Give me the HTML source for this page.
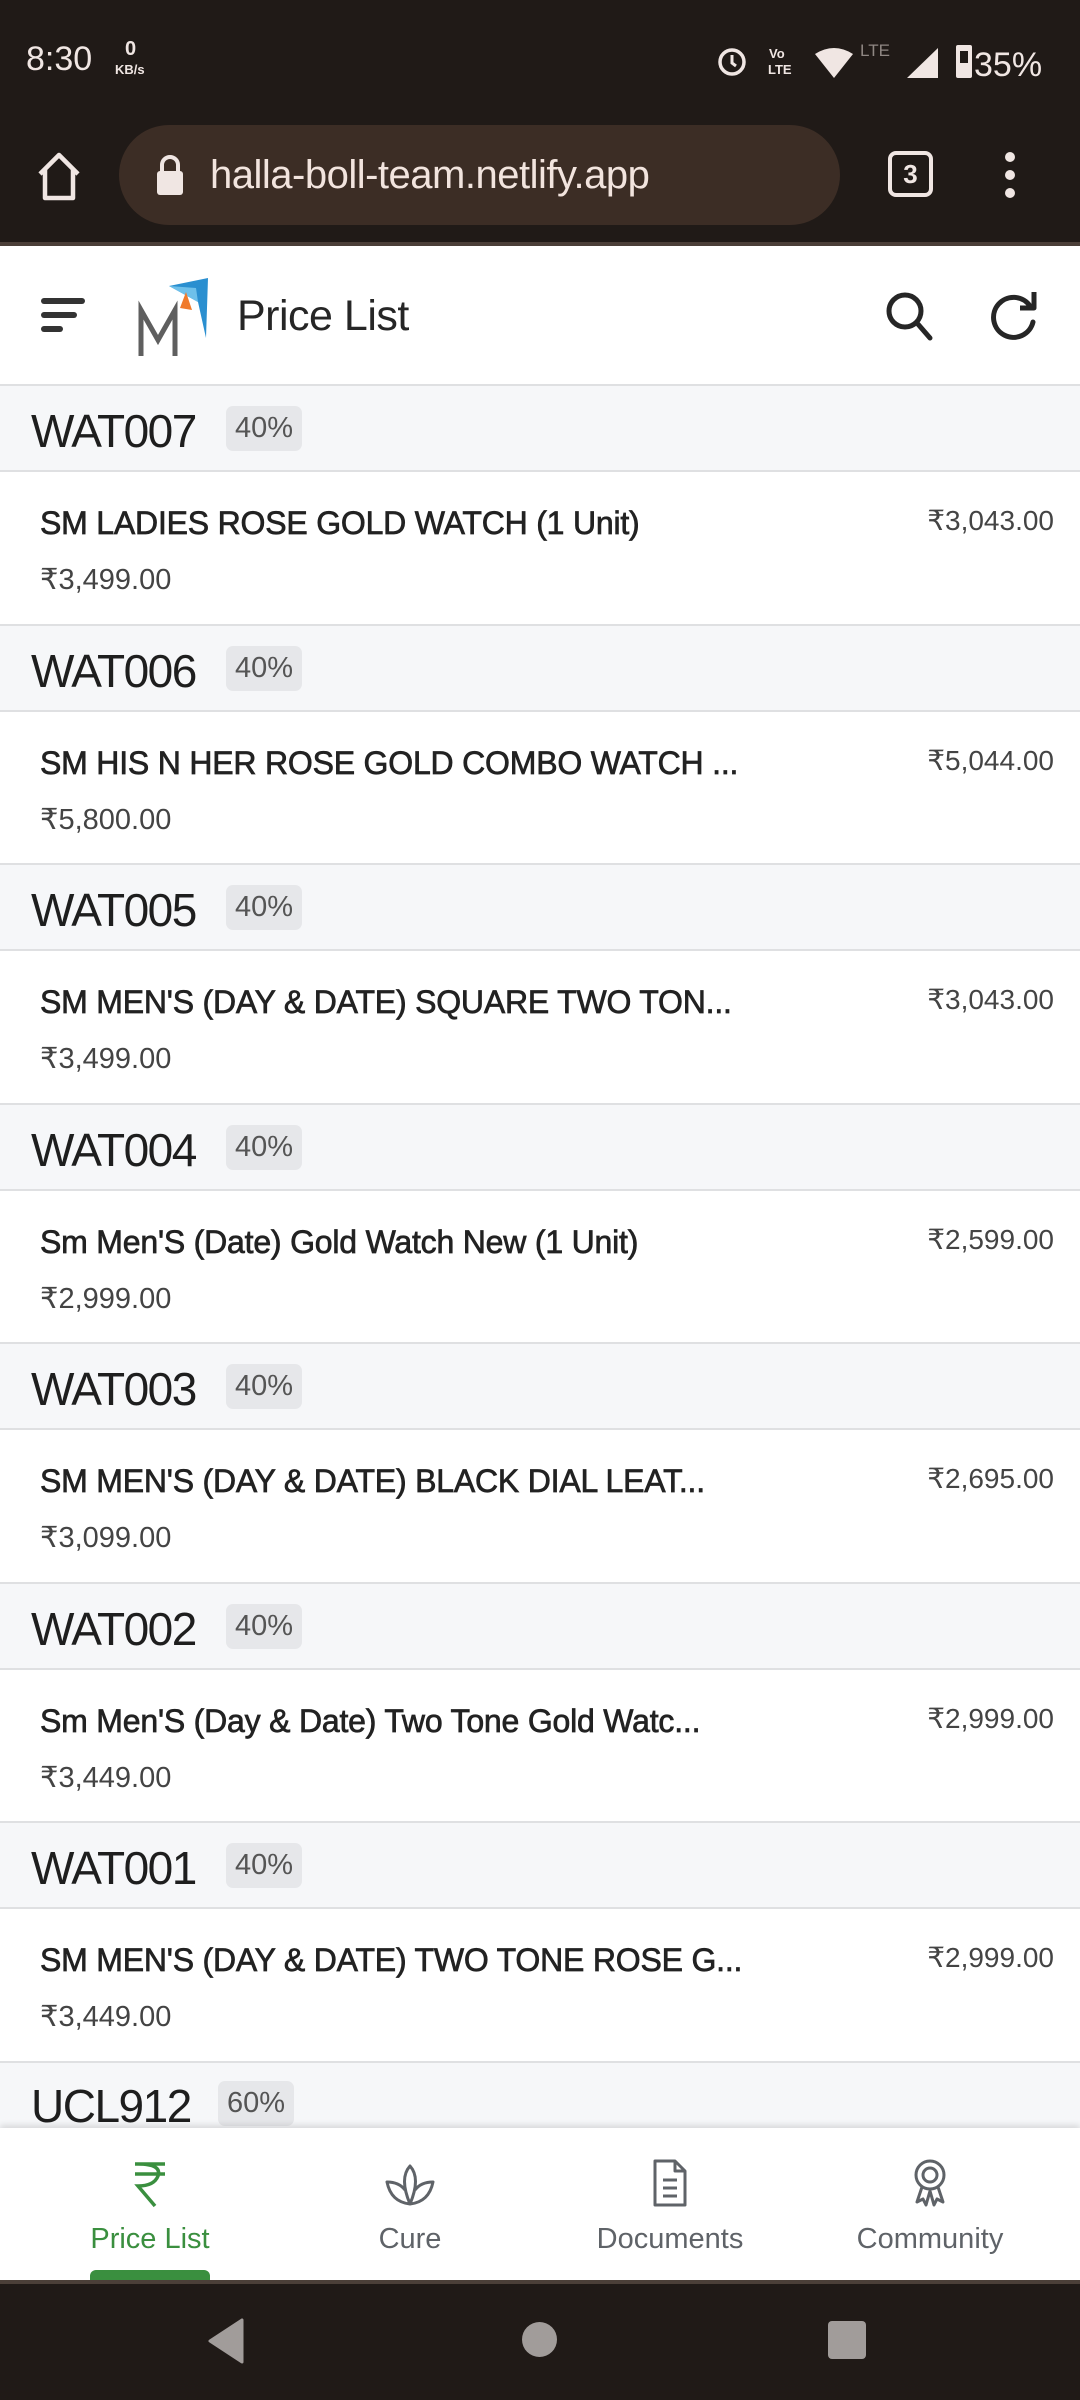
<!DOCTYPE html>
<html><head><meta charset="utf-8">
<style>
*{margin:0;padding:0;box-sizing:border-box}
body{width:1080px;height:2400px;overflow:hidden;background:#fff;font-family:"Liberation Sans","DejaVu Sans",sans-serif;position:relative}
.abs{position:absolute}
#status{left:0;top:0;width:1080px;height:245px;background:#201a17}
#status .line{left:0;top:242px;width:1080px;height:4px;background:#4b3f38}
.pill{left:119px;top:125px;width:721px;height:100px;border-radius:50px;background:#3c2d25}
.url{left:210px;top:153px;font-size:40px;color:#f2e4de;letter-spacing:-0.5px}
.gh{left:0;width:1080px;height:88px;background:#f6f7f9;border-top:2px solid #dfe0e2;border-bottom:2px solid #dfe0e2}
.gh .c{position:absolute;left:31px;top:18px;font-size:46px;color:#1e1e1e;letter-spacing:-1.5px}
.gh .b{position:absolute;left:226px;top:20px;height:45px;padding:0 9px;border-radius:7px;background:#e6e7ea;color:#555;font-size:29px;line-height:45px}
.it{left:0;width:1080px;height:151px;background:#fff}
.it .t{position:absolute;left:40px;top:33px;font-size:32px;color:#222;-webkit-text-stroke:0.7px #222;letter-spacing:-0.2px;white-space:nowrap}
.it .p{position:absolute;left:40px;top:90px;font-size:29px;color:#444}
.it .r{position:absolute;right:26px;top:32px;font-size:28px;color:#444}
#nav{left:0;top:2128px;width:1080px;height:152px;background:#fff;box-shadow:0 -3px 6px rgba(0,0,0,.12)}
.lab{position:absolute;top:95px;width:260px;text-align:center;font-size:29px;color:#5f6368}
#sys{left:0;top:2280px;width:1080px;height:120px;background:#201a17;border-top:4px solid #4b3f38}
</style></head><body>
<div id="status" class="abs">
 <div class="abs" style="left:26px;top:40px;font-size:34px;color:#f0e6e3">8:30</div>
 <div class="abs" style="left:125px;top:38px;font-size:20px;color:#f0e6e3;font-weight:bold">0</div>
 <div class="abs" style="left:115px;top:62px;font-size:13px;color:#f0e6e3;font-weight:bold">KB/s</div>
 <svg class="abs" style="left:712px;top:40px" width="340" height="40" viewBox="0 0 340 40">
  <circle cx="20" cy="22" r="12" fill="none" stroke="#f0e6e3" stroke-width="3.5"/><path d="M20 15v8l4 3" stroke="#f0e6e3" stroke-width="3" fill="none"/>
  <text x="57" y="18" font-size="13" fill="#f0e6e3" font-weight="bold" font-family="Liberation Sans">Vo</text>
  <text x="56" y="34" font-size="13" fill="#f0e6e3" font-weight="bold" font-family="Liberation Sans">LTE</text>
  <path d="M103 14 Q122 2 141 14 L122 38 Z" fill="#f0e6e3"/>
  <text x="148" y="16" font-size="17" fill="#8f8783" font-family="Liberation Sans">LTE</text>
  <path d="M195 38 L226 38 L226 8 Z" fill="#f0e6e3"/>
  <rect x="244" y="5" width="16" height="33" rx="2" fill="#f0e6e3"/><rect x="248" y="11" width="8" height="12" fill="#201a17"/>
  <text x="262" y="36" font-size="34" fill="#f0e6e3" font-family="Liberation Sans">35%</text>
 </svg>
 <svg class="abs" style="left:36px;top:152px" width="46" height="50" viewBox="0 0 46 50"><path d="M4 22 L23 3 L42 22 M9 18 V46 H37 V18" fill="none" stroke="#f0e6e3" stroke-width="4.5" stroke-linejoin="round"/></svg>
 <div class="abs pill"></div>
 <svg class="abs" style="left:155px;top:154px" width="30" height="42" viewBox="0 0 30 42"><path d="M7 18 V11 a8 8 0 0 1 16 0 V18" fill="none" stroke="#f0e6e3" stroke-width="4"/><rect x="2" y="17" width="26" height="24" rx="3" fill="#f0e6e3"/></svg>
 <div class="abs url">halla-boll-team.netlify.app</div>
 <div class="abs" style="left:888px;top:151px;width:45px;height:46px;border:4px solid #f0e6e3;border-radius:8px;color:#f0e6e3;font-size:26px;font-weight:bold;text-align:center;line-height:38px">3</div>
 <svg class="abs" style="left:998px;top:150px" width="24" height="50"><circle cx="12" cy="7" r="5" fill="#f0e6e3"/><circle cx="12" cy="25" r="5" fill="#f0e6e3"/><circle cx="12" cy="43" r="5" fill="#f0e6e3"/></svg>
 <div class="abs line"></div>
</div>
<!-- header -->
<svg class="abs" style="left:40px;top:296px" width="50" height="40"><rect x="1" y="2" width="44" height="6" rx="3" fill="#333"/><rect x="1" y="16" width="36" height="6" rx="3" fill="#333"/><rect x="1" y="30" width="22" height="6" rx="3" fill="#333"/></svg>
<svg class="abs" style="left:136px;top:278px" width="76" height="80" viewBox="0 0 76 80">
 <path d="M5 78 V32 L22 62 L39 32 V78" fill="none" stroke="#5f5f5f" stroke-width="5"/>
 <path d="M33 8 L72 0 L70 60 L62 24 Z" fill="#2a8fd0"/>
 <path d="M33 8 L60 10 L62 24 Z" fill="#6ec0ea"/>
 <path d="M44 30 L50 14 L56 32 Z" fill="#f07a2b"/>
</svg>
<div class="abs" style="left:237px;top:292px;font-size:43px;color:#262626;letter-spacing:-0.5px">Price List</div>
<svg class="abs" style="left:884px;top:290px" width="52" height="52" viewBox="0 0 52 52"><circle cx="21" cy="21" r="16" fill="none" stroke="#262626" stroke-width="5"/><path d="M33 33 L46 48" stroke="#262626" stroke-width="5" stroke-linecap="round"/></svg>
<svg class="abs" style="left:986px;top:288px" width="56" height="56" viewBox="0 0 56 56"><path d="M44 18 A20 20 0 1 0 47 34" fill="none" stroke="#262626" stroke-width="5" stroke-linecap="round"/><path d="M48 4 V20 H34" fill="none" stroke="#262626" stroke-width="5" stroke-linejoin="round"/></svg>

<div class="abs gh" style="top:384px"><span class="c">WAT007</span><span class="b">40%</span></div>
<div class="abs it" style="top:472px"><span class="t">SM LADIES ROSE GOLD WATCH (1 Unit)</span><span class="p">₹3,499.00</span><span class="r">₹3,043.00</span></div>
<div class="abs gh" style="top:624px"><span class="c">WAT006</span><span class="b">40%</span></div>
<div class="abs it" style="top:712px"><span class="t">SM HIS N HER ROSE GOLD COMBO WATCH ...</span><span class="p">₹5,800.00</span><span class="r">₹5,044.00</span></div>
<div class="abs gh" style="top:863px"><span class="c">WAT005</span><span class="b">40%</span></div>
<div class="abs it" style="top:951px"><span class="t">SM MEN'S (DAY &amp; DATE) SQUARE TWO TON...</span><span class="p">₹3,499.00</span><span class="r">₹3,043.00</span></div>
<div class="abs gh" style="top:1103px"><span class="c">WAT004</span><span class="b">40%</span></div>
<div class="abs it" style="top:1191px"><span class="t">Sm Men'S (Date) Gold Watch New (1 Unit)</span><span class="p">₹2,999.00</span><span class="r">₹2,599.00</span></div>
<div class="abs gh" style="top:1342px"><span class="c">WAT003</span><span class="b">40%</span></div>
<div class="abs it" style="top:1430px"><span class="t">SM MEN'S (DAY &amp; DATE) BLACK DIAL LEAT...</span><span class="p">₹3,099.00</span><span class="r">₹2,695.00</span></div>
<div class="abs gh" style="top:1582px"><span class="c">WAT002</span><span class="b">40%</span></div>
<div class="abs it" style="top:1670px"><span class="t">Sm Men'S (Day &amp; Date) Two Tone Gold Watc...</span><span class="p">₹3,449.00</span><span class="r">₹2,999.00</span></div>
<div class="abs gh" style="top:1821px"><span class="c">WAT001</span><span class="b">40%</span></div>
<div class="abs it" style="top:1909px"><span class="t">SM MEN'S (DAY &amp; DATE) TWO TONE ROSE G...</span><span class="p">₹3,449.00</span><span class="r">₹2,999.00</span></div>
<div class="abs gh" style="top:2061px;border-bottom:none;height:80px"><span class="c" style="top:16px">UCL912</span><span class="b" style="left:218px;top:18px">60%</span></div>

<div id="nav" class="abs">
 <svg class="abs" style="left:130px;top:32px" width="40" height="50" viewBox="0 0 40 50"><path d="M5 4 H35 M5 14 H35 M8 4 Q32 4 28 16 Q24 26 8 26 L25 46" fill="none" stroke="#3a8f3f" stroke-width="3.5"/></svg>
 <div class="lab" style="left:20px;color:#3a8f3f">Price List</div>
 <div class="abs" style="left:90px;top:142px;width:120px;height:12px;background:#3a8f3f;border-radius:6px 6px 0 0"></div>
 <svg class="abs" style="left:383px;top:34px" width="54" height="46" viewBox="0 0 54 46"><path d="M27 4 Q38 16 27 42 Q16 16 27 4 Z M27 42 Q8 40 4 20 Q16 20 22 28 M27 42 Q46 40 50 20 Q38 20 32 28" fill="none" stroke="#5f6368" stroke-width="3" stroke-linejoin="round"/></svg>
 <div class="lab" style="left:280px">Cure</div>
 <svg class="abs" style="left:652px;top:30px" width="36" height="50" viewBox="0 0 36 50"><path d="M3 3 H23 L33 13 V47 H3 Z M23 3 V13 H33 M11 22 H25 M11 30 H25 M11 38 H25" fill="none" stroke="#5f6368" stroke-width="3" stroke-linejoin="round"/></svg>
 <div class="lab" style="left:540px">Documents</div>
 <svg class="abs" style="left:910px;top:30px" width="40" height="50" viewBox="0 0 40 50"><circle cx="20" cy="17" r="14" fill="none" stroke="#5f6368" stroke-width="3"/><circle cx="20" cy="17" r="7" fill="none" stroke="#5f6368" stroke-width="3"/><path d="M12 29 L7 44 L13 41 L16 47 L20 33 L24 47 L27 41 L33 44 L28 29" fill="none" stroke="#5f6368" stroke-width="3" stroke-linejoin="round"/></svg>
 <div class="lab" style="left:800px">Community</div>
</div>
<div id="sys" class="abs">
 <svg class="abs" style="left:206px;top:34px" width="40" height="46"><path d="M36 2 V44 L4 23 Z" fill="#a19c9a" stroke="#a19c9a" stroke-width="3" stroke-linejoin="round"/></svg>
 <div class="abs" style="left:522px;top:38px;width:35px;height:35px;border-radius:50%;background:#a19c9a"></div>
 <div class="abs" style="left:828px;top:37px;width:38px;height:38px;border-radius:4px;background:#a19c9a"></div>
</div>
</body></html>
